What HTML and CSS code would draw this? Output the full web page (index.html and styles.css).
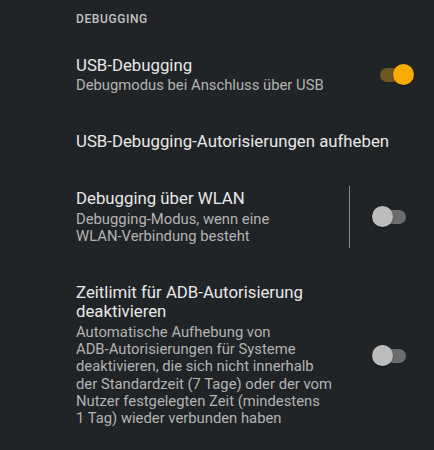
FILE: index.html
```html
<!DOCTYPE html>
<html lang="de">
<head>
    <meta charset="UTF-8">
    <meta name="viewport" content="width=device-width, initial-scale=1.0">
    <title>Entwickleroptionen - Debugging</title>
    <link rel="stylesheet" href="styles.css">
</head>
<body>
    <div class="section">
        <div class="section-title">Debugging</div>

        <div class="pref">
            <div class="pref-text">
                <div class="pref-title">USB-Debugging</div>
                <div class="pref-summary">Debugmodus bei Anschluss über USB</div>
            </div>
            <div class="pref-widget">
                <div class="switch on"></div>
            </div>
        </div>

        <div class="pref">
            <div class="pref-text">
                <div class="pref-title">USB-Debugging-Autorisierungen aufheben</div>
            </div>
        </div>

        <div class="pref">
            <div class="pref-text">
                <div class="pref-title">Debugging über WLAN</div>
                <div class="pref-summary">Debugging-Modus, wenn eine<br>WLAN-Verbindung besteht</div>
            </div>
            <div class="pref-widget">
                <div class="divider"></div>
                <div class="switch"></div>
            </div>
        </div>

        <div class="pref">
            <div class="pref-text">
                <div class="pref-title">Zeitlimit für ADB-Autorisierung<br>deaktivieren</div>
                <div class="pref-summary">Automatische Aufhebung von<br>ADB-Autorisierungen für Systeme<br>deaktivieren, die sich nicht innerhalb<br>der Standardzeit (7 Tage) oder der vom<br>Nutzer festgelegten Zeit (mindestens<br>1 Tag) wieder verbunden haben</div>
            </div>
            <div class="pref-widget">
                <div class="switch"></div>
            </div>
        </div>
    </div>
</body>
</html>
```

FILE: styles.css
```css
:root {
    --background: #212427;
    --title: #e8e8e8;
    --summary: #b3b3b3;
    --header: #c2c2c2;
    --divider: #8a8a8a;
    --accent: #f9ab00;
    --accent-track: #6e5722;
    --off-thumb: #bdbdbd;
    --off-track: #6a6c6e;
}

body {
    margin: 0;
    padding: 0;
    background-color: var(--background);
    font-family: Roboto, "Noto Sans", sans-serif;
    width: 434px;
    height: 450px;
    overflow: hidden;
}

.section {
    padding-top: 11px;
}

.section-title {
    padding-left: 76px;
    font-size: 12px;
    line-height: 16px;
    font-weight: 500;
    letter-spacing: 0.05em;
    text-transform: uppercase;
    color: var(--header);
    margin-bottom: 9.5px;
}

.pref {
    display: flex;
    align-items: center;
    padding: 19px 20px 19px 76px;
}

.pref-text {
    flex: 1;
    min-width: 0;
    white-space: nowrap;
}

.pref-title {
    font-size: 16.8px;
    line-height: 19px;
    color: var(--title);
}

.pref-summary {
    margin-top: 2.5px;
    font-size: 14.8px;
    line-height: 17.3px;
    color: var(--summary);
}

.pref-widget {
    display: flex;
    align-items: center;
}

/* divider reaches a bit past the text block */
.divider {
    width: 1.5px;
    height: 62px;
    margin: -3px 22px -3px 0;
    background-color: var(--divider);
}

.switch {
    position: relative;
    width: 42px;
    height: 22px;
}

.switch::before {
    content: '';
    position: absolute;
    left: 8px;
    top: 4px;
    width: 26px;
    height: 14px;
    border-radius: 7px;
    background-color: var(--off-track);
}

.switch::after {
    content: '';
    position: absolute;
    left: 0;
    top: 0;
    width: 21px;
    height: 21px;
    border-radius: 50%;
    background-color: var(--off-thumb);
    box-shadow: 0 1px 2px rgba(0, 0, 0, 0.3);
}

.switch.on::before {
    background-color: var(--accent-track);
}

.switch.on::after {
    left: 21px;
    background-color: var(--accent);
}
```
